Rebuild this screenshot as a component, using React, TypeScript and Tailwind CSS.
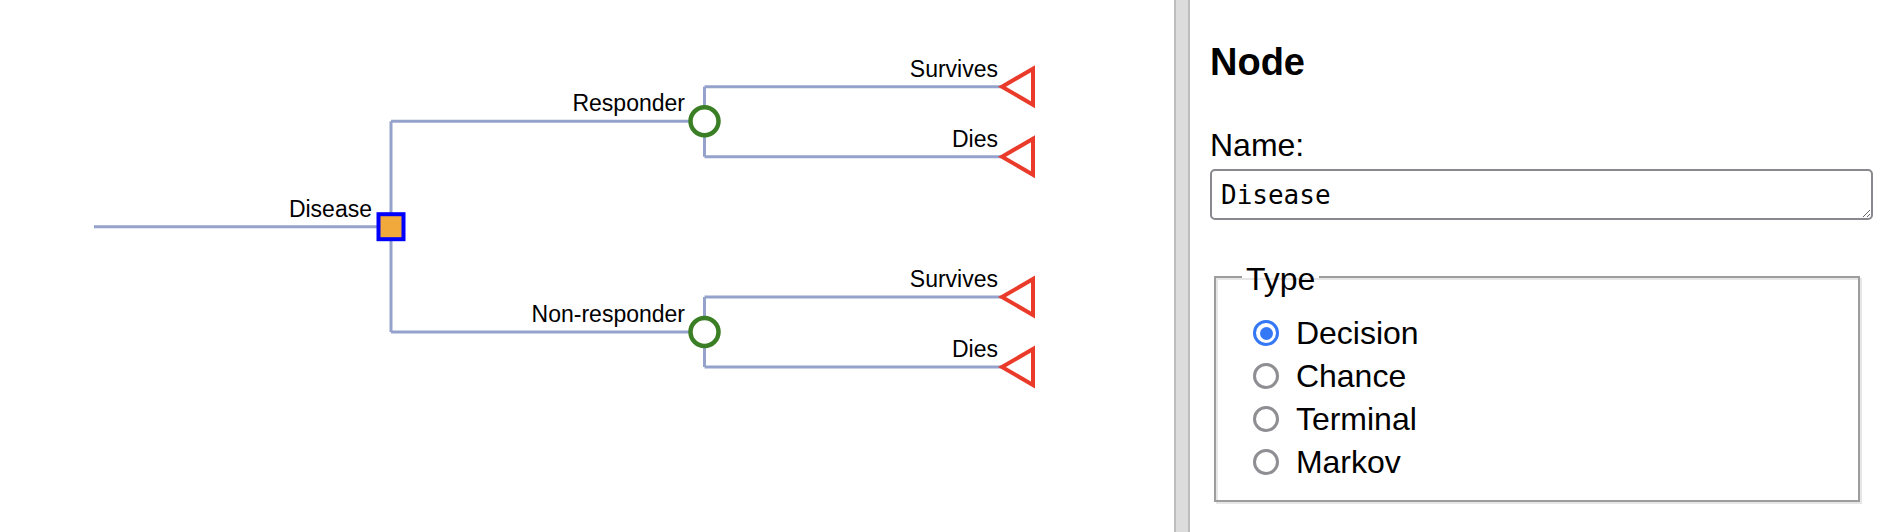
import React from 'react';

type Branch = { x1: number; y1: number; x2: number; y2: number };

const LINE = '#94a2cc';

// edges of the tree, in page pixels
const edges: Branch[] = [
    { x1: 94, y1: 226.7, x2: 391, y2: 226.7 },
    { x1: 391, y1: 121.3, x2: 391, y2: 332 },
    { x1: 391, y1: 121.3, x2: 704.5, y2: 121.3 },
    { x1: 391, y1: 332, x2: 704.5, y2: 332 },
    { x1: 704.5, y1: 86.7, x2: 704.5, y2: 156.7 },
    { x1: 704.5, y1: 86.7, x2: 1001, y2: 86.7 },
    { x1: 704.5, y1: 156.7, x2: 1001, y2: 156.7 },
    { x1: 704.5, y1: 297, x2: 704.5, y2: 367 },
    { x1: 704.5, y1: 297, x2: 1001, y2: 297 },
    { x1: 704.5, y1: 367, x2: 1001, y2: 367 },
];

const labels = [
    { x: 372, y: 216.7, text: 'Disease' },
    { x: 685, y: 111.3, text: 'Responder' },
    { x: 685, y: 322, text: 'Non-responder' },
    { x: 998, y: 76.7, text: 'Survives' },
    { x: 998, y: 146.7, text: 'Dies' },
    { x: 998, y: 287, text: 'Survives' },
    { x: 998, y: 357, text: 'Dies' },
];

const chanceNodes = [121.3, 332];
const terminals = [86.7, 156.7, 297, 367];

function Tree() {
    return (
        <svg width="1174" height="532" className="block">
            {edges.map((e, i) => (
                <line key={i} x1={e.x1} y1={e.y1} x2={e.x2} y2={e.y2} stroke={LINE} strokeWidth={3} />
            ))}

            {labels.map((l, i) => (
                <text
                    key={i}
                    x={l.x}
                    y={l.y}
                    textAnchor="end"
                    fontSize={23}
                    fontFamily="'Liberation Sans', Arial, sans-serif"
                    fill="#000"
                >
                    {l.text}
                </text>
            ))}

            {/* decision node */}
            <rect x={378.5} y={214.2} width={25} height={25} fill="#f2a93b" stroke="#0000ff" strokeWidth={4} />

            {/* chance nodes */}
            {chanceNodes.map((y) => (
                <circle key={y} cx={704.5} cy={y} r={14} fill="#fff" stroke="#3a7f25" strokeWidth={4.5} />
            ))}

            {/* terminal nodes */}
            {terminals.map((y) => (
                <polygon
                    key={y}
                    points={`1002,${y} 1033,${y - 18} 1033,${y + 18}`}
                    fill="#fff"
                    stroke="#ea3a2a"
                    strokeWidth={4}
                />
            ))}
        </svg>
    );
}

function Radio({ checked }: { checked?: boolean }) {
    if (checked) {
        return (
            <span className="w-[26.7px] h-[26.7px] rounded-full border-[3px] border-[#3478f6] flex items-center justify-center shrink-0 bg-white">
                <span className="w-[13px] h-[13px] rounded-full bg-[#3478f6]" />
            </span>
        );
    }
    return <span className="w-[26.7px] h-[26.7px] rounded-full border-[3px] border-[#8e8e93] shrink-0 bg-white" />;
}

const types = ['Decision', 'Chance', 'Terminal', 'Markov'];

export default function App() {
    return (
        <div className="flex w-full h-screen bg-white overflow-hidden font-['Liberation_Sans',Arial,sans-serif] text-black">
            {/* Tree canvas */}
            <div className="flex-1 min-w-0">
                <Tree />
            </div>

            {/* Splitter */}
            <div className="w-[16px] shrink-0 bg-[#dcdcdc] border-x-2 border-[#bdbdbd]" />

            {/* Node panel */}
            <div className="w-[694px] shrink-0 pl-[20px] pr-[11px] pt-[43px]">
                <h2 className="text-[38px] leading-[38px] font-bold">Node</h2>

                <div className="mt-[48px] text-[32px] leading-[32px]">Name:</div>

                <textarea
                    rows={1}
                    defaultValue="Disease"
                    className="mt-[8px] block w-full h-[51px] border-2 border-[#88888e] rounded-[5px] pl-[9px] pr-[6px] pt-[10px] text-[26px] leading-[29px] font-['DejaVu_Sans_Mono',monospace] text-black"
                />

                <fieldset className="mt-[39px] ml-[4px] mr-[13px] border-2 border-[#9d9d9d] pl-[26px] pt-[16.5px] pb-[16.5px] shadow-[inset_2px_2px_0_#e6e6e6,2px_2px_0_#e6e6e6]">
                    <legend className="px-[4px] pt-[4px] text-[32px] leading-[32px]">Type</legend>
                    {types.map((t, i) => (
                        <label key={t} className="flex items-center h-[43px] text-[32px] leading-[43px]">
                            <span className="ml-[10.7px] mr-[16.5px] flex">
                                <Radio checked={i === 0} />
                            </span>
                            {t}
                        </label>
                    ))}
                </fieldset>
            </div>
        </div>
    );
}
